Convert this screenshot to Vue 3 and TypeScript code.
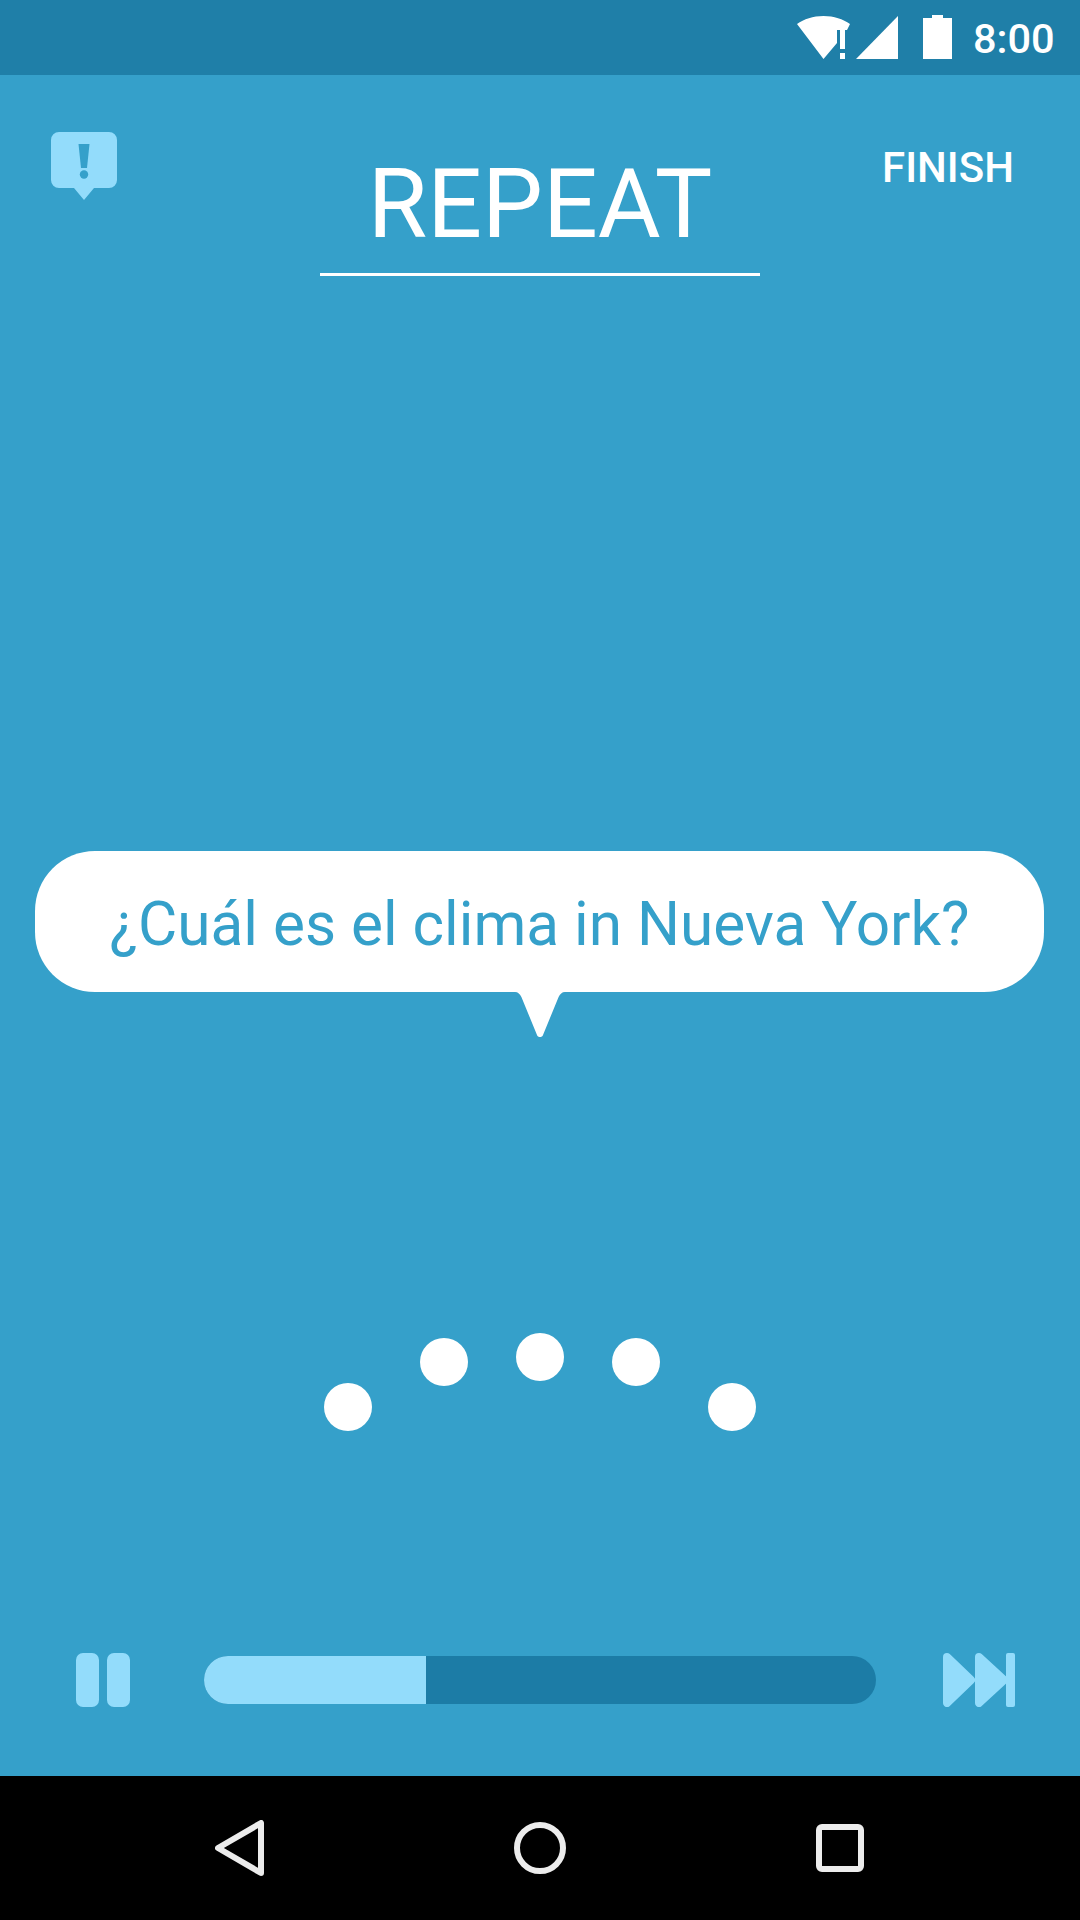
<template>
  <div class="screen">
    <header class="status">
      <svg class="ic-wifi" viewBox="0 0 54 43" width="54" height="43">
        <path d="M0 8C7 3 16 0 26.5 0S46 3 53 8l-3 6H40v13L26.5 43z" fill="#fff" />
        <rect x="43" y="14" width="5" height="19" fill="#fff" />
        <rect x="43" y="37" width="5" height="6" fill="#fff" />
      </svg>
      <svg class="ic-signal" viewBox="0 0 42 43" width="42" height="43">
        <path d="M42 0v43H0z" fill="#fff" />
      </svg>
      <svg class="ic-battery" viewBox="0 0 29 44" width="29" height="44">
        <path d="M9 0h11v3h9v41H0V3h9z" fill="#fff" />
      </svg>
      <span class="clock">8:00</span>
    </header>

    <main class="main">
      <div class="top">
        <svg class="ic-alert" viewBox="0 0 66 68" width="66" height="68">
          <path d="M8 0h50a8 8 0 0 1 8 8v40a8 8 0 0 1-8 8H43L33 68 23 56H8a8 8 0 0 1-8-8V8a8 8 0 0 1 8-8z" fill="#93dcfb" />
          <path d="M27.5 12h11l-2.5 24h-6z" fill="#35a0ca" />
          <circle cx="33" cy="42.5" r="4.2" fill="#35a0ca" />
        </svg>
        <h1 class="title">REPEAT</h1>
        <span class="finish">FINISH</span>
      </div>

      <div class="bubble">
        <span>¿Cuál es el clima in Nueva York?</span>
        <svg class="bubble-tail" viewBox="0 0 56 47" width="56" height="47">
          <path d="M0 0h3c3 0 5 2 6.4 5L25 43c.8 2.7 5.2 2.7 6 0L46.6 5c1.4-3 3.4-5 6.4-5h3z" fill="#fff" />
        </svg>
      </div>

      <div class="dots">
        <i v-for="(d, n) in dots" :key="n" class="dot" :style="{ marginTop: d + 'px' }" />
      </div>

      <div class="controls">
        <div class="pause"><i /><i /></div>
        <div class="track"><div class="fill" :style="{ width: progress + '%' }" /></div>
        <svg class="ic-skip" viewBox="0 0 72 54" width="72" height="54">
          <path d="M4 4 L28 27 L4 50z" fill="#93dcfb" stroke="#93dcfb" stroke-width="8" stroke-linejoin="round" />
          <path d="M36 4 L61 27 L36 50z" fill="#93dcfb" stroke="#93dcfb" stroke-width="8" stroke-linejoin="round" />
          <rect x="63" y="0" width="9" height="54" rx="2" fill="#93dcfb" />
        </svg>
      </div>
    </main>

    <nav class="navbar">
      <svg class="nav-back" viewBox="0 0 49 56" width="49" height="56">
        <path d="M46 3v50L3 28z" fill="none" stroke="#ececec" stroke-width="6" stroke-linejoin="round" />
      </svg>
      <svg class="nav-home" viewBox="0 0 52 52" width="52" height="52">
        <circle cx="26" cy="26" r="23" fill="none" stroke="#ececec" stroke-width="6" />
      </svg>
      <svg class="nav-recent" viewBox="0 0 48 48" width="48" height="48">
        <rect x="3" y="3" width="42" height="42" rx="3" fill="none" stroke="#ececec" stroke-width="6" />
      </svg>
    </nav>
  </div>
</template>

<script setup lang="ts">
// arc of the listening dots, offset from the top of the row
const dots: number[] = [50, 5, 0, 5, 50]
const progress = 33
</script>

<style scoped>
.screen {
  width: 1080px;
  height: 1920px;
  display: flex;
  flex-direction: column;
  background: #35a0ca;
  font-family: Roboto, sans-serif;
  overflow: hidden;
}

.status {
  height: 75px;
  flex-shrink: 0;
  display: flex;
  align-items: flex-start;
  background: #1f7fa8;
  padding: 15px 0 0 797px;
  box-sizing: border-box;
  color: #fff;
}

.ic-wifi {
  margin-top: 1px;
}

.ic-signal {
  margin: 1px 0 0 5px;
}

.ic-battery {
  margin-left: 25px;
}

.clock {
  margin-left: 21px;
  font-size: 41.5px;
  line-height: 48px;
  font-weight: 500;
}

.main {
  flex: 1;
  display: flex;
  flex-direction: column;
  min-height: 0;
}

.top {
  display: grid;
  grid-template-columns: 1fr 440px 1fr;
  padding-top: 57px;
  align-items: start;
}

.ic-alert {
  margin-left: 51px;
}

.title {
  margin: 16px 0 0;
  padding-bottom: 13px;
  border-bottom: 3px solid #fff;
  color: #fff;
  font-size: 96.5px;
  line-height: 112px;
  font-weight: 400;
  text-align: center;
}

.finish {
  justify-self: end;
  margin: 11px 66px 0 0;
  color: #fff;
  font-size: 42px;
  line-height: 50px;
  font-weight: 500;
}

.bubble {
  position: relative;
  margin: 575px 36px 0 35px;
  height: 141px;
  padding-top: 6px;
  box-sizing: border-box;
  display: flex;
  align-items: center;
  justify-content: center;
  background: #fff;
  border-radius: 60px;
  color: #35a0ca;
  font-size: 60.3px;
  line-height: 74px;
}

.bubble-tail {
  position: absolute;
  left: 477px;
  top: 141px;
}

.dots {
  margin-top: 341px;
  height: 74px;
  display: flex;
  justify-content: center;
  gap: 48px;
}

.dot {
  width: 48px;
  height: 48px;
  border-radius: 50%;
  background: #fff;
}

.controls {
  margin-top: 246px;
  display: flex;
  align-items: center;
  padding: 0 65px 0 76px;
}

.pause {
  display: flex;
  gap: 8px;
}

.pause i {
  width: 23px;
  height: 54px;
  border-radius: 7px;
  background: #93dcfb;
}

.track {
  flex: 1;
  height: 48px;
  margin: 0 67px 0 74px;
  border-radius: 24px;
  background: #1c7ca6;
  overflow: hidden;
}

.fill {
  height: 100%;
  background: #93dcfb;
}

.navbar {
  height: 144px;
  flex-shrink: 0;
  background: #000;
  display: flex;
  align-items: flex-start;
  justify-content: space-between;
  padding: 44px 216px 0 215px;
  box-sizing: border-box;
}

.nav-home {
  margin-top: 2px;
}

.nav-recent {
  margin-top: 4px;
}
</style>
